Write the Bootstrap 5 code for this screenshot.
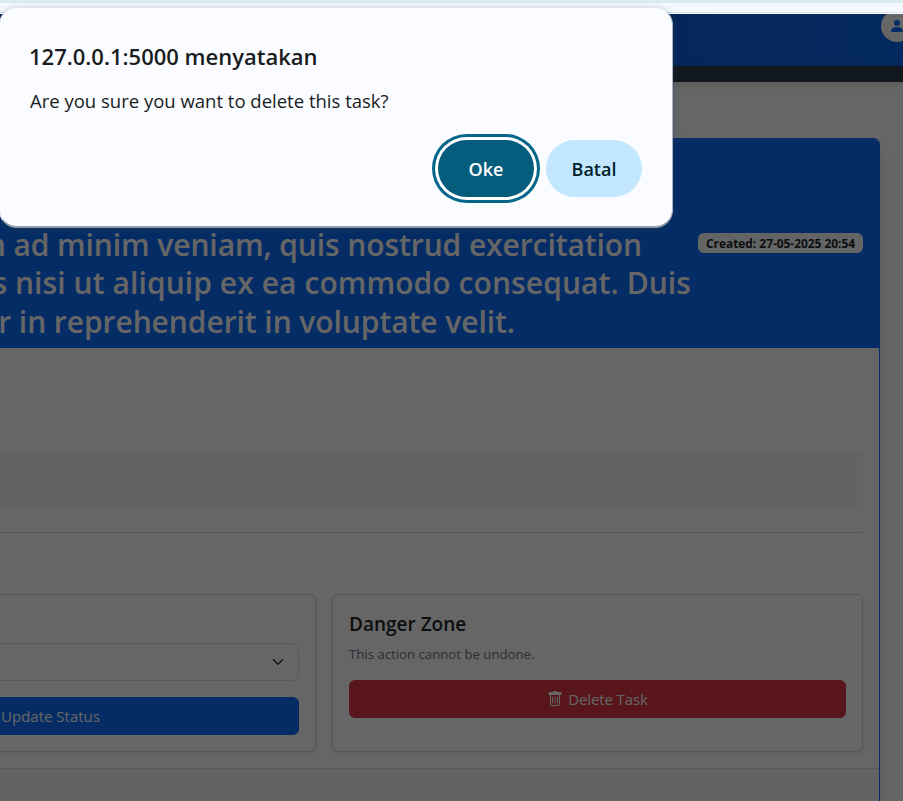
<!DOCTYPE html>
<html lang="id">
<head>
<meta charset="utf-8">
<meta name="viewport" content="width=device-width, initial-scale=1">
<title>Task details</title>
<link href="https://cdn.jsdelivr.net/npm/bootstrap@5.3.0/dist/css/bootstrap.min.css" rel="stylesheet">
<style>
body{font-family:"Segoe UI","Open Sans","Noto Sans",sans-serif;height:801px;background:#fff}
.browser-edge{height:14px;flex:none;background:linear-gradient(#dcebf1 0 3px,#f5f9fe 3px 12px,#d8e1e9 12px 13px,#fff 13px)}
.site-bar{height:52px;background:linear-gradient(90deg,#0d6efd,#0a63e4 75%,#0b66ea)}
.sub-bar{height:16px;background:#2c3e50;box-shadow:0 2px 8px rgba(0,0,0,.12)}
.avatar{width:32px;height:32px;margin:-4px -10px 0 0}
.task-wrap{padding:56px 23px 0 0}
.task-card{width:1112px;height:760px;box-shadow:0 8px 16px rgba(0,0,0,.1)}
.task-head{height:209px}
.task-title{font-size:30px;line-height:38.4px;font-weight:600;width:906px;white-space:nowrap;margin-bottom:-2px}
.l1{padding-right:49px;letter-spacing:-.09px}
.l2{letter-spacing:.08px}
.l3{padding-right:176px;letter-spacing:-.07px}
.created{font-size:11.9px;line-height:12px;height:20px;width:165px;padding:4px 0;background:#f8fcfa}
.soft-box{height:56px;margin-top:88px;background:#f5fbf8}
.rule{margin:24px 0 61px;height:1px;background:#dcdcdc}
.panel{height:158px;border-color:#d2d2d2}
.panel h5{font-size:19px;line-height:26px;height:24px;font-weight:600}
.undo{font-size:13.2px;line-height:22px;height:21px;margin-bottom:16px}
.btn{font-size:15px;height:38px;line-height:24px}
.del-label{letter-spacing:-.1px;margin-left:1px}
.soft-foot{height:100px;background:#f5fbf8;border-color:#d2d2d2}
.form-select{height:38px}
.shade{background:rgba(0,0,0,.6)}
.prompt-box{left:-1px;top:7px;width:674px;height:221px;border-radius:18px;background:#fbfcff;border:1px solid #dfe6ec;border-right-color:#a9b4c0;border-bottom:2px solid #93a0ae;padding:31px 30px 0 29px;box-shadow:0 2px 7px rgba(40,60,80,.35);color:#191c1e}
.prompt-title{font-size:22px;line-height:34px;font-weight:600}
.prompt-text{font-size:18.5px;line-height:28px;margin-top:14px;padding-left:1px}
.prompt-btn{width:96px;height:57px;border:0;border-radius:29px;font-size:18px;line-height:29px;padding-top:3px;font-weight:600;color:#001e2c;background:#c3e7ff}
.prompt-ok{background:#045d7c;color:#fff;box-shadow:0 0 0 3px #fff,0 0 0 6px #04678a}
.prompt-actions{gap:12px;margin-top:25px}
</style>
<script src="https://cdn.jsdelivr.net/npm/bootstrap@5.3.0/dist/js/bootstrap.bundle.min.js"></script>
</head>
<body class="d-flex flex-column overflow-hidden position-relative">
<div class="browser-edge"></div>
<main class="flex-grow-1 position-relative overflow-hidden">
  <nav class="site-bar d-flex justify-content-end overflow-hidden">
    <div class="avatar bg-white rounded-circle d-flex align-items-center justify-content-center text-primary flex-shrink-0">
      <svg width="16" height="16" viewBox="0 0 16 16" fill="currentColor"><path d="M3 14s-1 0-1-1 1-4 6-4 6 3 6 4-1 1-1 1H3Zm5-6a3 3 0 1 0 0-6 3 3 0 0 0 0 6Z"/></svg>
    </div>
  </nav>
  <div class="sub-bar"></div>
  <div class="task-wrap d-flex justify-content-end">
    <div class="card border-primary task-card flex-shrink-0">
      <div class="card-header bg-primary text-white border-primary task-head d-flex align-items-center justify-content-between">
        <div class="task-title text-end align-self-end">
          <div><span class="l1">m ad minim veniam, quis nostrud exercitation</span></div>
          <div><span class="l2">s nisi ut aliquip ex ea commodo consequat. Duis</span></div>
          <div><span class="l3">r in reprehenderit in voluptate velit.</span></div>
        </div>
        <span class="badge text-dark created">Created: 27-05-2025 20:54</span>
      </div>
      <div class="card-body flex-grow-0">
        <div class="soft-box rounded"></div>
        <div class="rule"></div>
        <div class="d-flex gap-3">
          <div class="card panel shadow-sm flex-fill w-50">
            <div class="card-body">
              <h5 class="mb-2">&nbsp;</h5>
              <select class="form-select mb-3" aria-label="Status"><option></option></select>
              <button class="btn btn-primary w-100">Update Status</button>
            </div>
          </div>
          <div class="card panel shadow-sm flex-fill w-50">
            <div class="card-body">
              <h5 class="mb-2">Danger Zone</h5>
              <p class="undo text-secondary">This action cannot be undone.</p>
              <button class="btn btn-danger w-100 d-flex justify-content-center align-items-center gap-1">
                <svg width="16" height="16" viewBox="0 0 16 16" fill="currentColor"><path d="M5.5 5.5A.5.5 0 0 1 6 6v6a.5.5 0 0 1-1 0V6a.5.5 0 0 1 .5-.5Zm2.5 0a.5.5 0 0 1 .5.5v6a.5.5 0 0 1-1 0V6a.5.5 0 0 1 .5-.5Zm3 .5a.5.5 0 0 0-1 0v6a.5.5 0 0 0 1 0V6Z"/><path d="M14.5 3a1 1 0 0 1-1 1H13v9a2 2 0 0 1-2 2H5a2 2 0 0 1-2-2V4h-.5a1 1 0 0 1-1-1V2a1 1 0 0 1 1-1H6a1 1 0 0 1 1-1h2a1 1 0 0 1 1 1h3.5a1 1 0 0 1 1 1v1ZM4.118 4 4 4.059V13a1 1 0 0 0 1 1h6a1 1 0 0 0 1-1V4.059L11.882 4H4.118Z"/><path d="M2 1.5h12v2H2z"/></svg>
                <span class="del-label">Delete Task</span>
              </button>
            </div>
          </div>
        </div>
      </div>
      <div class="soft-foot border-top"></div>
    </div>
  </div>
  <div class="shade position-absolute top-0 start-0 w-100 h-100"></div>
</main>
<div class="prompt-box position-absolute" role="alertdialog" aria-labelledby="pt">
  <div class="prompt-title" id="pt"><span>127.0.0.1:5000 menyatakan</span></div>
  <div class="prompt-text"><span>Are you sure you want to delete this task?</span></div>
  <div class="prompt-actions d-flex justify-content-end">
    <button class="prompt-btn prompt-ok">Oke</button>
    <button class="prompt-btn">Batal</button>
  </div>
</div>
</body>
</html>
